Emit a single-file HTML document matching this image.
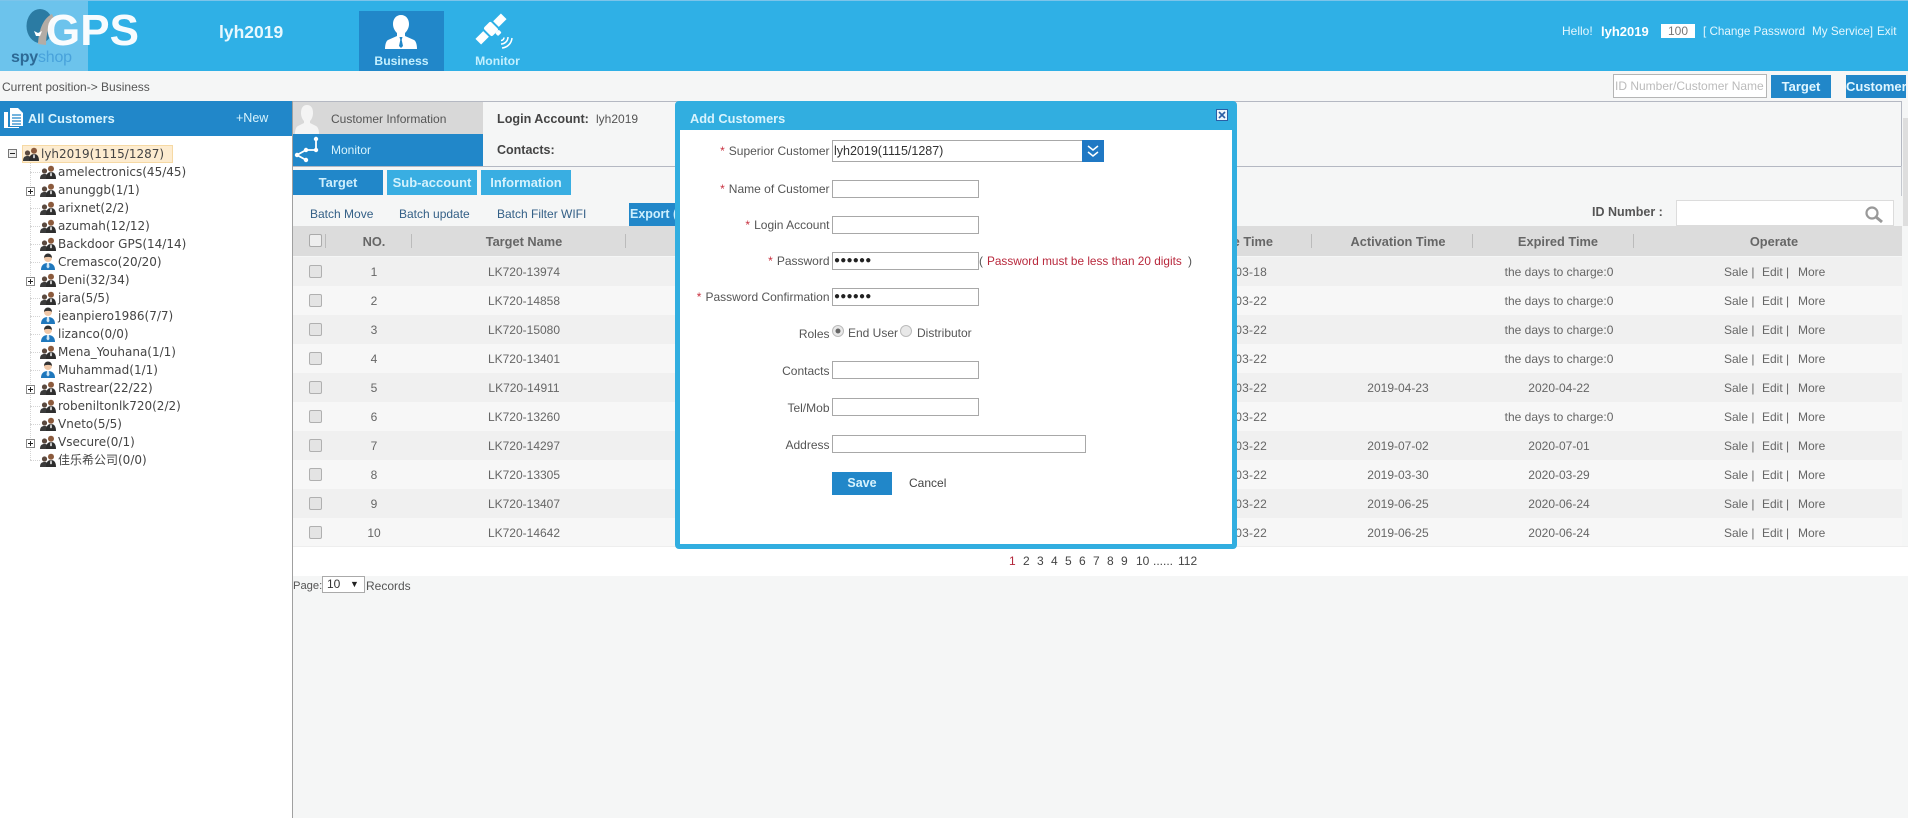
<!DOCTYPE html>
<html>
<head>
<meta charset="utf-8">
<style>
html,body{margin:0;padding:0;width:1908px;height:818px;overflow:hidden;background:#f5f6f6}
body{position:relative;font-family:"Liberation Sans","Noto Sans CJK SC",sans-serif;font-size:12px;color:#555}
div,span{position:absolute;white-space:nowrap;box-sizing:border-box}
svg{position:absolute;overflow:visible}
.w{color:#fff}
.btn{background:#2187c9;color:#cdeffd;font-weight:bold;font-size:13px;text-align:center}
.btnl{background:#39aee2;color:#d4f2fd;font-weight:bold;font-size:13px;text-align:center}
.t{font-family:"DejaVu Sans","Noto Sans CJK SC",sans-serif;font-size:12px;color:#444;line-height:18px;left:58px}
.r{left:293px;width:1609px;height:29px;line-height:30px;color:#666}
.r.a{background:#f0f0f0}.r.b{background:#f7f7f7}
.r span{top:0}
.r .cb{left:16px;top:8px;width:13px;height:13px;border:1px solid #b0b0b0;border-radius:2px;background:#e4e4e4}
.cb{width:13px;height:13px;border:1px solid #b0b0b0;border-radius:2px;background:#e4e4e4}
.no{left:41px;width:80px;text-align:center}
.nm{left:161px;width:140px;text-align:center}
.dt{left:874px;width:100px;text-align:right;letter-spacing:.2px}
.ac{left:1045px;width:120px;text-align:center}
.ex{left:1176px;width:180px;text-align:center}
.op1{left:1431px}.op2{left:1469px}.op3{left:1505px}
.h{font-weight:bold;color:#666;font-size:12.800px;top:226px;line-height:31px;text-align:center}
.dv{top:234px;width:1px;height:14px;background:#bbb}
.l{right:1078.500px;text-align:right;line-height:18px;color:#555}
.l i{font-style:normal;color:#c8303f;margin-right:4px}
.f{left:832px;width:147px;height:18px;background:#fff;border:1px solid #a8a8a8}
.pw{font-size:10px;letter-spacing:.2px;color:#222;line-height:16px;padding-left:1px}
.p{top:553px;line-height:17px;color:#444}
.ic{left:40px;width:16px;height:16px}
.ex2{width:9px;height:9px;border:1px solid #888;background:#fff;left:26px}
.ex2:before{content:"";position:absolute;left:1px;right:1px;top:3px;height:1px;background:#222}
.ex2.pl:after{content:"";position:absolute;top:1px;bottom:1px;left:3px;width:1px;background:#222}
.tl{left:30px;width:10px;border-top:1px dotted #d4d4d4}
</style>
</head>
<body>
<svg width="0" height="0" style="position:absolute">
<symbol id="g" viewBox="0 0 16 16">
<circle cx="4.500" cy="7" r="2.600" fill="#5b4a40"/><path d="M0 15c0-4 2-5 4.500-5S9 11 9 15z" fill="#3b3b3b"/>
<circle cx="11" cy="4.800" r="3" fill="#8b5a3c"/><path d="M6 15c0-5 2-7 5-7s5 2 5 7z" fill="#2e2e2e"/>
<path d="M10.300 8.500h1.400l.3 3-1 1-1-1z" fill="#d8d8d8"/>
</symbol>
<symbol id="u" viewBox="0 0 16 18">
<circle cx="8" cy="5" r="4" fill="#f0c8a8"/><path d="M4 5c0-3 2-4.500 4-4.500S12 2 12 5c-1-1.500-7-1.500-8 0z" fill="#333"/>
<path d="M1 17c0-5 3-7 7-7s7 2 7 7z" fill="#1f78bd"/><path d="M7 10h2l.5 4-1.500 1.500L6.500 14z" fill="#cfe6f5"/>
</symbol>
</svg>

<!-- header -->
<div style="left:0;top:0;width:1908px;height:71px;background:#2fb0e6"></div>
<div style="left:0;top:0;width:1908px;height:1px;background:#7cc4ea"></div>
<div style="left:0;top:1px;width:88px;height:70px;background:#6cc3ec"></div>
<svg style="left:0;top:0" width="90" height="71">
<ellipse cx="40" cy="26" rx="13.500" ry="17" fill="#2b7ba3"/>
<path d="M52 14C44 18 39 28 38 44l8 1c0-12 3-20 9-24z" fill="#b3aca5"/>
<path d="M34 31l4 2 4-2-2 5h-4z" fill="#fff"/>
</svg>
<div style="left:46px;top:8px;font-size:44px;line-height:46px;font-weight:bold;color:#fff;opacity:.96">GPS</div>
<div style="left:11px;top:48px;font-size:16px;line-height:20px;font-weight:bold;color:#2d6a96;letter-spacing:-.2px">spy<span style="position:static;color:#48a2db;font-weight:normal">shop</span></div>
<div class="w" style="left:219px;top:21px;font-size:17.500px;line-height:22px;font-weight:bold;color:#e8f8fe">lyh2019</div>

<div style="left:359px;top:11px;width:85px;height:60px;background:#2187c9"></div>
<svg style="left:384px;top:13px" width="34" height="37" viewBox="0 0 34 37">
<path d="M17 2c5 0 8 4 8 9 0 4-2 7-4 9v3l9 4c2 1 3 5 3 9H1c0-4 1-8 3-9l9-4v-3c-2-2-4-5-4-9 0-5 3-9 8-9z" fill="#fff"/>
<path d="M15.500 24h3l-.8 3 1.300 6-2 2-2-2 1.300-6z" fill="#2187c9"/>
</svg>
<div style="left:359px;top:53px;width:85px;text-align:center;font-weight:bold;font-size:12.200px;line-height:17px;color:#c4f0ff">Business</div>
<svg style="left:477px;top:14px" width="38" height="38" viewBox="0 0 38 38">
<g transform="rotate(-45 14 15)" fill="#fff">
<rect x="-4" y="11" width="11" height="8"/><rect x="21" y="11" width="11" height="8"/>
<rect x="9" y="9" width="10" height="12" rx="2"/>
<rect x="14" y="21" width="5" height="4" rx="1"/>
</g>
<g fill="none" stroke="#fff" stroke-width="1.500">
<path d="M24 30a7 7 0 0 0 7-7"/><path d="M25 34a11 11 0 0 0 10-10"/><path d="M24 26.500a3 3 0 0 0 3-3"/>
</g>
</svg>
<div style="left:455px;top:53px;width:85px;text-align:center;font-weight:bold;font-size:12.200px;line-height:17px;color:#c4f0ff">Monitor</div>

<div style="left:1562px;top:24px;line-height:15px;color:#e4f7fe">Hello!</div>
<div style="left:1601px;top:24px;line-height:15px;color:#fff;font-weight:bold;font-size:13px">lyh2019</div>
<div style="left:1661px;top:24px;width:34px;height:14px;background:#fff;color:#777;text-align:center;line-height:15px">100</div>
<div style="left:1703px;top:24px;line-height:15px;color:#e4f7fe;font-size:11.700px">[ Change Password</div>
<div style="left:1812px;top:24px;line-height:15px;color:#e4f7fe;font-size:11.700px">My Service]</div>
<div style="left:1877px;top:24px;line-height:15px;color:#e4f7fe;font-size:11.700px">Exit</div>

<!-- breadcrumb -->
<div style="left:2px;top:79px;line-height:16px;color:#555">Current position-&gt; Business</div>
<div style="left:1613px;top:74px;width:154px;height:24px;background:#fff;border:1px solid #b5b5b5;line-height:22px;color:#bbb;padding-left:1px;overflow:hidden;font-size:12px">ID Number/Customer Name</div>
<div class="btn" style="left:1771px;top:75px;width:60px;height:23px;line-height:23px;color:#e0f6ff">Target</div>
<div class="btn" style="left:1846px;top:75px;width:60px;height:23px;line-height:23px;color:#e0f6ff">Customer</div>

<!-- sidebar -->
<div style="left:0;top:101px;width:292px;height:717px;background:#fff"></div>
<div style="left:0;top:101px;width:293px;height:35px;background:#2187c9"></div>
<svg style="left:3px;top:107px" width="21" height="22" viewBox="0 0 21 22">
<path d="M7 1h8l5 5v13H7z" fill="#fff"/><path d="M1 5h4v15h11v1H1z" fill="#fff"/>
<path d="M9 8h9M9 11h9M9 14h9M9 17h9" stroke="#2187c9" stroke-width="1.200"/>
</svg>
<div style="left:28px;top:110px;line-height:17px;font-weight:bold;font-size:12.800px;color:#d7f3fd">All Customers</div>
<div style="left:236px;top:110px;line-height:17px;color:#d7f3fd;font-size:12.500px">+New</div>

<!-- tree lines -->
<div style="left:30px;top:158px;width:0;height:302px;border-left:1px dotted #d4d4d4"></div>
<div class="tl" style="top:172px"></div>
<div class="tl" style="top:208px"></div>
<div class="tl" style="top:226px"></div>
<div class="tl" style="top:244px"></div>
<div class="tl" style="top:262px"></div>
<div class="tl" style="top:298px"></div>
<div class="tl" style="top:316px"></div>
<div class="tl" style="top:334px"></div>
<div class="tl" style="top:352px"></div>
<div class="tl" style="top:370px"></div>
<div class="tl" style="top:406px"></div>
<div class="tl" style="top:424px"></div>
<div class="tl" style="top:460px"></div>

<div style="left:22px;top:145px;width:151px;height:18px;background:#fdecd0;border:1px solid #f6d9a4"></div>
<div class="ex2" style="left:8px;top:149px;border-color:#777;background:#eee"></div>
<svg class="ic" style="left:23px;top:146px"><use href="#g" width="16" height="16"/></svg>
<div class="t" style="left:41px;top:145px">lyh2019(1115/1287)</div>

<svg class="ic" style="top:164px"><use href="#g" width="16" height="16"/></svg><div class="t" style="top:163px">amelectronics(45/45)</div>
<div class="ex2 pl" style="top:187px"></div><svg class="ic" style="top:182px"><use href="#g" width="16" height="16"/></svg><div class="t" style="top:181px">anunggb(1/1)</div>
<svg class="ic" style="top:200px"><use href="#g" width="16" height="16"/></svg><div class="t" style="top:199px">arixnet(2/2)</div>
<svg class="ic" style="top:218px"><use href="#g" width="16" height="16"/></svg><div class="t" style="top:217px">azumah(12/12)</div>
<svg class="ic" style="top:236px"><use href="#g" width="16" height="16"/></svg><div class="t" style="top:235px">Backdoor GPS(14/14)</div>
<svg class="ic" style="top:253px"><use href="#u" width="16" height="18"/></svg><div class="t" style="top:253px">Cremasco(20/20)</div>
<div class="ex2 pl" style="top:277px"></div><svg class="ic" style="top:272px"><use href="#g" width="16" height="16"/></svg><div class="t" style="top:271px">Deni(32/34)</div>
<svg class="ic" style="top:290px"><use href="#g" width="16" height="16"/></svg><div class="t" style="top:289px">jara(5/5)</div>
<svg class="ic" style="top:307px"><use href="#u" width="16" height="18"/></svg><div class="t" style="top:307px">jeanpiero1986(7/7)</div>
<svg class="ic" style="top:325px"><use href="#u" width="16" height="18"/></svg><div class="t" style="top:325px">lizanco(0/0)</div>
<svg class="ic" style="top:344px"><use href="#g" width="16" height="16"/></svg><div class="t" style="top:343px">Mena_Youhana(1/1)</div>
<svg class="ic" style="top:361px"><use href="#u" width="16" height="18"/></svg><div class="t" style="top:361px">Muhammad(1/1)</div>
<div class="ex2 pl" style="top:385px"></div><svg class="ic" style="top:380px"><use href="#g" width="16" height="16"/></svg><div class="t" style="top:379px">Rastrear(22/22)</div>
<svg class="ic" style="top:398px"><use href="#g" width="16" height="16"/></svg><div class="t" style="top:397px">robeniltonlk720(2/2)</div>
<svg class="ic" style="top:416px"><use href="#g" width="16" height="16"/></svg><div class="t" style="top:415px">Vneto(5/5)</div>
<div class="ex2 pl" style="top:439px"></div><svg class="ic" style="top:434px"><use href="#g" width="16" height="16"/></svg><div class="t" style="top:433px">Vsecure(0/1)</div>
<svg class="ic" style="top:452px"><use href="#g" width="16" height="16"/></svg><div class="t" style="top:451px">佳乐希公司(0/0)</div>

<!-- content frame -->
<div style="left:292px;top:101px;width:1px;height:717px;background:#a0a0a0"></div>
<div style="left:293px;top:101px;width:1609px;height:66px;border:1px solid #b4b8c2;border-left:0"></div>
<div style="left:1901px;top:166px;width:1px;height:30px;background:#c4c8cf"></div>
<div style="left:1903px;top:118px;width:5px;height:108px;background:#dedede"></div>

<div style="left:293px;top:102px;width:190px;height:32px;background:#d8d8d8"></div>
<svg style="left:295px;top:104px" width="24" height="30" viewBox="0 0 24 30">
<path d="M12 1c4 0 6 3 6 8 0 3-1 6-3 8v2l6 3c2 1 3 4 3 8H0c0-4 1-7 3-8l6-3v-2c-2-2-3-5-3-8 0-5 2-8 6-8z" fill="#f4f4f4"/>
</svg>
<div style="left:331px;top:110px;line-height:18px;color:#555">Customer Information</div>
<div style="left:293px;top:134px;width:190px;height:32px;background:#2187c9"></div>
<svg style="left:293px;top:134px" width="30" height="32">
<path d="M23 5v11H13L4 21l9 5" fill="none" stroke="#fff" stroke-width="1.800"/>
<circle cx="23" cy="5" r="2.200" fill="#fff"/><circle cx="23" cy="16" r="2.200" fill="#fff"/><circle cx="13" cy="16" r="2.200" fill="#fff"/><circle cx="4" cy="21" r="2.200" fill="#fff"/><circle cx="13" cy="26" r="2.200" fill="#fff"/>
</svg>
<div style="left:331px;top:142px;line-height:17px;color:#d7f3fd">Monitor</div>
<div style="left:497px;top:110px;line-height:18px;font-weight:bold;color:#444;font-size:12.600px">Login Account:</div>
<div style="left:596px;top:110px;line-height:18px;color:#555">lyh2019</div>
<div style="left:497px;top:142px;line-height:17px;font-weight:bold;color:#444;font-size:12.500px">Contacts:</div>

<div class="btn" style="left:293px;top:170px;width:90px;height:25px;line-height:26px">Target</div>
<div class="btnl" style="left:387px;top:170px;width:90px;height:25px;line-height:26px">Sub-account</div>
<div class="btnl" style="left:481px;top:170px;width:90px;height:25px;line-height:26px">Information</div>

<div style="left:310px;top:206px;line-height:17px;color:#335f86">Batch Move</div>
<div style="left:399px;top:206px;line-height:17px;color:#335f86">Batch update</div>
<div style="left:497px;top:206px;line-height:17px;color:#335f86">Batch Filter WIFI</div>
<div class="btn" style="left:629px;top:203px;width:60px;height:23px;line-height:23px;text-align:left;padding-left:1px;overflow:hidden;font-size:12.500px">Export (</div>

<div style="left:1592px;top:204px;line-height:17px;font-weight:bold;color:#555;font-size:12.500px">ID Number :</div>
<div style="left:1676px;top:200px;width:218px;height:26px;background:#fff;border:1px solid #dcdcdc"></div>
<svg style="left:1863px;top:205px" width="22" height="18">
<circle cx="9" cy="8" r="5.500" fill="none" stroke="#999" stroke-width="2.200"/><path d="M13 12l6 5" stroke="#999" stroke-width="3"/>
</svg>

<!-- table header -->
<div style="left:293px;top:226px;width:1609px;height:30px;background:#dcdcdc"></div>
<div class="cb" style="left:309px;top:234px;border-color:#aaa;background:#eee"></div>
<div class="dv" style="left:325px"></div><div class="dv" style="left:411px"></div><div class="dv" style="left:625px"></div>
<div class="dv" style="left:1311px"></div><div class="dv" style="left:1472px"></div><div class="dv" style="left:1633px"></div>
<div class="h" style="left:334px;width:80px">NO.</div>
<div class="h" style="left:454px;width:140px">Target Name</div>
<div class="h" style="left:1173px;width:100px;text-align:right">Create Time</div>
<div class="h" style="left:1338px;width:120px">Activation Time</div>
<div class="h" style="left:1498px;width:120px">Expired Time</div>
<div class="h" style="left:1714px;width:120px">Operate</div>

<!-- rows -->
<div class="r a" style="top:257px"><span class="cb"></span><span class="no">1</span><span class="nm">LK720-13974</span><span class="dt">2019-03-18</span><span class="ex">the days to charge:0</span><span class="op1">Sale |</span><span class="op2">Edit |</span><span class="op3">More</span></div>
<div class="r b" style="top:286px"><span class="cb"></span><span class="no">2</span><span class="nm">LK720-14858</span><span class="dt">2019-03-22</span><span class="ex">the days to charge:0</span><span class="op1">Sale |</span><span class="op2">Edit |</span><span class="op3">More</span></div>
<div class="r a" style="top:315px"><span class="cb"></span><span class="no">3</span><span class="nm">LK720-15080</span><span class="dt">2019-03-22</span><span class="ex">the days to charge:0</span><span class="op1">Sale |</span><span class="op2">Edit |</span><span class="op3">More</span></div>
<div class="r b" style="top:344px"><span class="cb"></span><span class="no">4</span><span class="nm">LK720-13401</span><span class="dt">2019-03-22</span><span class="ex">the days to charge:0</span><span class="op1">Sale |</span><span class="op2">Edit |</span><span class="op3">More</span></div>
<div class="r a" style="top:373px"><span class="cb"></span><span class="no">5</span><span class="nm">LK720-14911</span><span class="dt">2019-03-22</span><span class="ac">2019-04-23</span><span class="ex">2020-04-22</span><span class="op1">Sale |</span><span class="op2">Edit |</span><span class="op3">More</span></div>
<div class="r b" style="top:402px"><span class="cb"></span><span class="no">6</span><span class="nm">LK720-13260</span><span class="dt">2019-03-22</span><span class="ex">the days to charge:0</span><span class="op1">Sale |</span><span class="op2">Edit |</span><span class="op3">More</span></div>
<div class="r a" style="top:431px"><span class="cb"></span><span class="no">7</span><span class="nm">LK720-14297</span><span class="dt">2019-03-22</span><span class="ac">2019-07-02</span><span class="ex">2020-07-01</span><span class="op1">Sale |</span><span class="op2">Edit |</span><span class="op3">More</span></div>
<div class="r b" style="top:460px"><span class="cb"></span><span class="no">8</span><span class="nm">LK720-13305</span><span class="dt">2019-03-22</span><span class="ac">2019-03-30</span><span class="ex">2020-03-29</span><span class="op1">Sale |</span><span class="op2">Edit |</span><span class="op3">More</span></div>
<div class="r a" style="top:489px"><span class="cb"></span><span class="no">9</span><span class="nm">LK720-13407</span><span class="dt">2019-03-22</span><span class="ac">2019-06-25</span><span class="ex">2020-06-24</span><span class="op1">Sale |</span><span class="op2">Edit |</span><span class="op3">More</span></div>
<div class="r b" style="top:518px"><span class="cb"></span><span class="no">10</span><span class="nm">LK720-14642</span><span class="dt">2019-03-22</span><span class="ac">2019-06-25</span><span class="ex">2020-06-24</span><span class="op1">Sale |</span><span class="op2">Edit |</span><span class="op3">More</span></div>
<div style="left:293px;top:546px;width:1615px;height:30px;background:#fff;border-top:1px solid #eee"></div>

<!-- pagination -->
<div class="p" style="left:1009px;color:#b3263a">1</div>
<div class="p" style="left:1023px">2</div><div class="p" style="left:1037px">3</div><div class="p" style="left:1051px">4</div><div class="p" style="left:1065px">5</div><div class="p" style="left:1079px">6</div><div class="p" style="left:1093px">7</div><div class="p" style="left:1107px">8</div><div class="p" style="left:1121px">9</div><div class="p" style="left:1136px">10</div>
<div class="p" style="left:1153px">......</div><div class="p" style="left:1178px">112</div>

<div style="left:293px;top:578px;line-height:16px;color:#555;font-size:11.200px">Page:</div>
<div style="left:322px;top:576px;width:43px;height:17px;background:#fff;border:1px solid #aaa;line-height:15px;padding-left:4px;color:#333">10<span style="left:27px;top:0;font-size:9px;color:#222">▼</span></div>
<div style="left:366px;top:578px;line-height:16px;color:#555">Records</div>

<!-- modal -->
<div style="left:675px;top:101px;width:562px;height:448px;background:#fff;border:5px solid #31aee0;border-top:29px solid #31aee0;border-radius:4px"></div>
<div style="left:690px;top:110px;line-height:17px;font-weight:bold;font-size:12.800px;color:#d7f3fd">Add Customers</div>
<svg style="left:1216px;top:109px" width="12" height="12">
<rect x=".5" y=".5" width="11" height="11" fill="#eef6fb" stroke="#2a5fa5"/>
<path d="M3 3l6 6M9 3l-6 6" stroke="#2a5fa5" stroke-width="1.600"/>
</svg>

<div class="l" style="top:142px"><i>*</i>Superior Customer</div>
<div style="left:832px;top:140px;width:251px;height:22px;background:#fff;border:1px solid #a8a8a8;line-height:20px;padding-left:1px;color:#333;font-size:12.500px">lyh2019(1115/1287)</div>
<div style="left:1082px;top:140px;width:22px;height:22px;background:#1f78c4"></div>
<svg style="left:1082px;top:140px" width="22" height="22"><path d="M6 6l5 4 5-4M6 12l5 4 5-4" fill="none" stroke="#fff" stroke-width="1.500"/></svg>

<div class="l" style="top:180px"><i>*</i>Name of Customer</div>
<div class="f" style="top:180px"></div>
<div class="l" style="top:216px"><i>*</i>Login Account</div>
<div class="f" style="top:216px"></div>
<div class="l" style="top:252px"><i>*</i>Password</div>
<div class="f pw" style="top:252px">●●●●●●</div>
<div style="left:979px;top:252px;line-height:18px;color:#555">(</div>
<div style="left:987px;top:252px;line-height:18px;color:#b8283c;font-size:11.800px">Password must be less than 20 digits</div>
<div style="left:1188px;top:252px;line-height:18px;color:#555">)</div>
<div class="l" style="top:288px"><i>*</i>Password Confirmation</div>
<div class="f pw" style="top:288px">●●●●●●</div>

<div class="l" style="top:325px">Roles</div>
<svg style="left:831px;top:324px" width="90" height="16">
<circle cx="7" cy="7" r="5.500" fill="#e8e8e8" stroke="#bbb"/><circle cx="7" cy="7" r="2.500" fill="#666"/>
<circle cx="75" cy="7" r="5.500" fill="#e8e8e8" stroke="#bbb"/>
</svg>
<div style="left:848px;top:325px;line-height:17px;color:#555">End User</div>
<div style="left:917px;top:325px;line-height:17px;color:#555">Distributor</div>

<div class="l" style="top:362px">Contacts</div>
<div class="f" style="top:361px"></div>
<div class="l" style="top:399px">Tel/Mob</div>
<div class="f" style="top:398px"></div>
<div class="l" style="top:436px">Address</div>
<div class="f" style="top:435px;width:254px"></div>

<div class="btn" style="left:832px;top:472px;width:60px;height:23px;line-height:23px;color:#d7f3fd;font-size:12.500px">Save</div>
<div style="left:909px;top:475px;line-height:17px;color:#444">Cancel</div>
</body>
</html>
